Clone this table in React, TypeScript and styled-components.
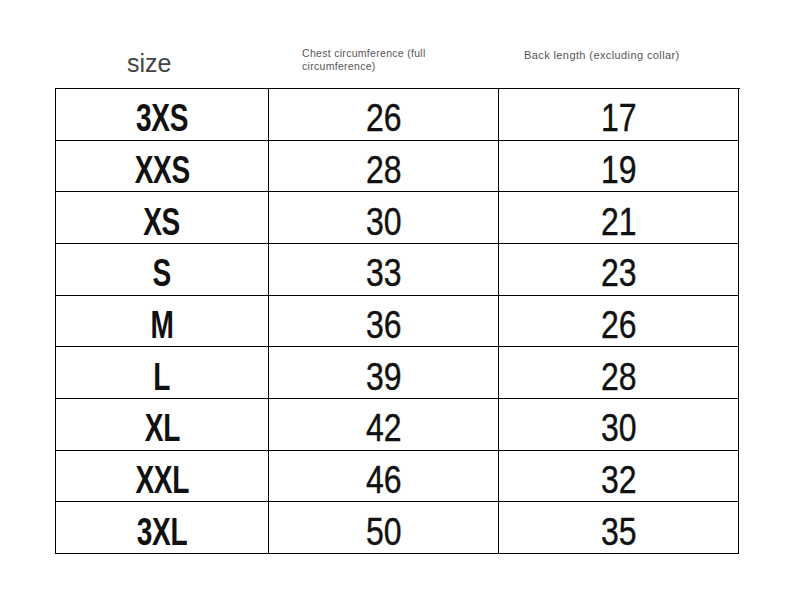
import * as React from 'react'
import styled, { createGlobalStyle } from 'styled-components'

const rows: [string, number, number][] = [
  ['3XS', 26, 17],
  ['XXS', 28, 19],
  ['XS', 30, 21],
  ['S', 33, 23],
  ['M', 36, 26],
  ['L', 39, 28],
  ['XL', 42, 30],
  ['XXL', 46, 32],
  ['3XL', 50, 35]
]

const App: React.FunctionComponent = () => (
  <Page>
    <GlobalStyle />
    <Header>
      <SizeHead>size</SizeHead>
      <ChestHead>
        Chest circumference (full
        <br />
        circumference)
      </ChestHead>
      <BackHead>Back length (excluding collar)</BackHead>
    </Header>
    <Table>
      {rows.map(([size, chest, back]) => (
        <React.Fragment key={size}>
          <Cell>
            <Label>{size}</Label>
          </Cell>
          <Cell>
            <Value>{chest}</Value>
          </Cell>
          <Cell>
            <Value>{back}</Value>
          </Cell>
        </React.Fragment>
      ))}
    </Table>
  </Page>
)

export { App as default }

const GlobalStyle = createGlobalStyle`
  html, body {
    margin: 0;
    background: #fff;
  }
`

const Page = styled.div`
  width: 792px;
  height: 591px;
  padding-left: 55px;
  box-sizing: border-box;
  font-family: 'Liberation Sans', Arial, sans-serif;
`

const Header = styled.div`
  display: grid;
  grid-template-columns: 213px 230px 240px;
  height: 88px;
  color: #444;
`

const SizeHead = styled.div`
  font-size: 25px;
  padding-top: 48px;
  padding-left: 72px;
  line-height: 30px;
`

const ChestHead = styled.div`
  font-size: 10.5px;
  letter-spacing: 0.3px;
  line-height: 13px;
  padding-top: 47px;
  padding-left: 34px;
  color: #555;
`

const BackHead = styled.div`
  font-size: 11px;
  letter-spacing: 0.4px;
  line-height: 13px;
  padding-top: 49px;
  padding-left: 26px;
  color: #555;
`

const Table = styled.div`
  display: grid;
  grid-template-columns: 213px 230px 240px;
  grid-auto-rows: 51.67px;
  width: 684.5px;
  box-sizing: border-box;
  border-top: 1.5px solid #000;
  border-left: 1.5px solid #000;
`

const Cell = styled.div`
  display: flex;
  align-items: center;
  justify-content: center;
  padding-top: 8px;
  box-sizing: border-box;
  border-right: 1.5px solid #000;
  border-bottom: 1.5px solid #000;
  color: #111;
  overflow: hidden;
`

const Value = styled.span`
  display: inline-block;
  font-size: 39px;
  line-height: 40px;
  transform: scaleX(0.82);
  -webkit-text-stroke: 0.4px #111;
`

const Label = styled(Value)`
  font-weight: bold;
  letter-spacing: -0.5px;
  transform: scaleX(0.72);
  -webkit-text-stroke: 0;
`
